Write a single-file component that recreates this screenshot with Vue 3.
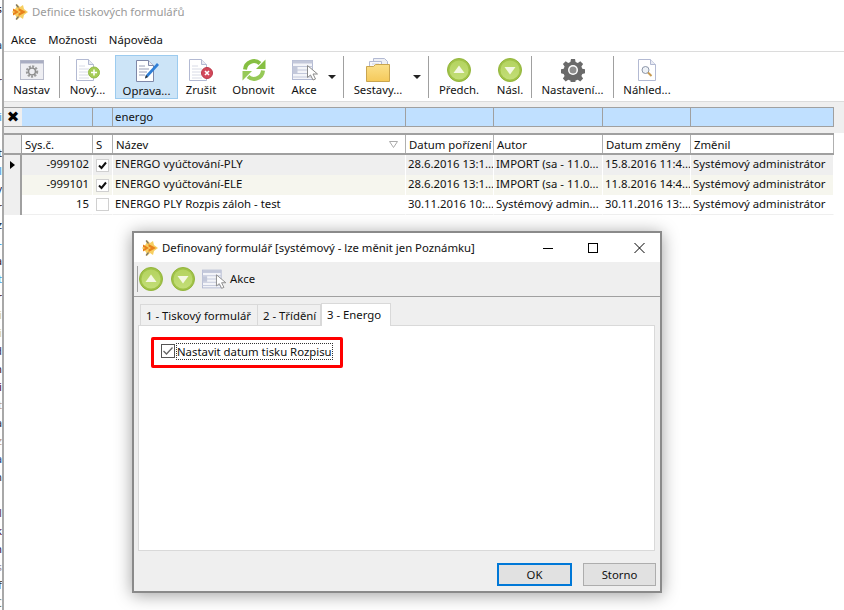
<script setup>
const behind = [
  ['s', '#301010'], ['', ''], ['a', '#204060'], ['', ''], ['r', '#502020'], ['', ''], ['i', '#40a0e0'], ['', ''],
  ['t', '#202020'], ['l', '#40a0e0'], ['y', '#203050'], ['r', '#503020'], ['z', '#203040'], ['-', '#40a0e0'],
  ['a', '#402020'], ['t', '#40a0e0'], ['r', '#502020'], ['i', '#d8d0a0'], ['i', '#d8d0a0'], ['d', '#404060'],
  ['n', '#402020'], ['i', '#501030'], ['t', '#c0a080'], ['a', '#303040'], ['z', '#c0a080'], ['a', '#204080'],
  ['n', '#303030'], ['', ''], ['l', '#604060'], ['k', '#501030'], ['n', '#302050'], ['s', '#a09090'],
  ['f', '#403020'], ['C', '#808060'], ['(', '#808080']
]

const tools = [
  { icon: 'i-window', label: 'Nastav', width: 55 },
  { sep: true },
  { icon: 'i-new', label: 'Nový...', width: 55 },
  { icon: 'i-edit', label: 'Oprava...', width: 63, active: true },
  { icon: 'i-del', label: 'Zrušit', width: 46 },
  { icon: 'i-refresh', label: 'Obnovit', width: 59 },
  { icon: 'i-list', label: 'Akce', width: 60, menu: 18 },
  { sep: true },
  { icon: 'i-folder', label: 'Sestavy...', width: 84, menu: 16 },
  { sep: true },
  { icon: 'i-up', label: 'Předch.', width: 60 },
  { icon: 'i-down', label: 'Násl.', width: 42 },
  { sep: true },
  { icon: 'i-gear', label: 'Nastavení...', width: 81 },
  { sep: true },
  { icon: 'i-preview', label: 'Náhled...', width: 66 }
]

const filterCells = ['', '', 'energo', '', '', '', '']
const headers = [
  { t: 'Sys.č.' }, { t: 'S' }, { t: 'Název', sort: true }, { t: 'Datum pořízení' },
  { t: 'Autor' }, { t: 'Datum změny' }, { t: 'Změnil' }
]
const rows = [
  { id: '-999102', on: true, name: 'ENERGO vyúčtování-PLY', a: '28.6.2016 13:1...', b: 'IMPORT (sa - 11.0...', c: '15.8.2016 11:4...', d: 'Systémový administrátor', cls: 'r1', cur: true },
  { id: '-999101', on: true, name: 'ENERGO vyúčtování-ELE', a: '28.6.2016 13:1...', b: 'IMPORT (sa - 11.0...', c: '11.8.2016 14:4...', d: 'Systémový administrátor', cls: 'r2' },
  { id: '15', on: false, name: 'ENERGO PLY Rozpis záloh - test', a: '30.11.2016 10:...', b: 'Systémový admin...', c: '30.11.2016 13:...', d: 'Systémový administrátor', cls: 'r3' }
]
</script>

<template>
  <div class="desk">
    <svg class="defs" width="0" height="0" aria-hidden="true">
      <defs>
        <linearGradient id="fold" x1="0" y1="0" x2="0" y2="1">
          <stop offset="0" stop-color="#fbe08a" />
          <stop offset="1" stop-color="#f5c95a" />
        </linearGradient>
        <linearGradient id="ball" x1="0" y1="0" x2="0" y2="1">
          <stop offset="0" stop-color="#b4d35f" />
          <stop offset="1" stop-color="#c3de78" />
        </linearGradient>
        <symbol id="i-logo" viewBox="0 0 16 16">
          <path d="M5 0l3 3 3-2 1 4 4 3-4 3-1 4-3-2-3 3-1-4-4-4 4-4z" fill="#f7cf62" />
          <path d="M1 4.500L7 8l-6 3.500V9L3.500 8 1 7zM6.500 4L14 8l-7.500 4V9.500L9 8 6.500 6.500z" fill="#e8811c" />
          <path d="M4 .5l2.500 3M4 15.500l2.500-3" stroke="#7a7468" stroke-width="1.200" />
        </symbol>
        <symbol id="i-window" viewBox="0 0 24 24">
          <rect x=".5" y="2.500" width="23" height="19" fill="#eeeef2" stroke="#b9bccb" />
          <rect x=".5" y="2.500" width="23" height="3" fill="#a9adc2" />
          <circle cx="12" cy="13.500" r="5" fill="none" stroke="#9a9a9a" stroke-width="2.400" stroke-dasharray="2 1.300" />
          <circle cx="12" cy="13.500" r="3.400" fill="none" stroke="#8c8c8c" stroke-width="1.400" />
        </symbol>
        <symbol id="i-page" viewBox="0 0 24 24">
          <path d="M.5 1.500h12l5 5v16H.5z" fill="#fff" stroke="#b3bad3" />
          <path d="M12.500 1.500v5h5" fill="#e9ebf3" stroke="#b3bad3" />
          <path d="M3 8h6M3 11h10M3 14h9M3 17h10M3 20h10" stroke="#d8dbe6" />
        </symbol>
        <symbol id="i-new" viewBox="0 0 24 24">
          <use href="#i-page" width="24" height="24" />
          <circle cx="18" cy="14.500" r="5.500" fill="#a5cc57" stroke="#94bb48" />
          <path d="M18 11.500v6M15 14.500h6" stroke="#fff" stroke-width="1.500" />
        </symbol>
        <symbol id="i-edit" viewBox="0 0 24 24">
          <path d="M1.500 2.500h12l5 5v16h-17z" fill="#fff" stroke="#7f88a8" />
          <path d="M13.500 2.500v5h5" fill="#e9ebf3" stroke="#7f88a8" />
          <path d="M4 8h6M4 11h10M4 14h8M4 17h6" stroke="#9aa0b8" />
          <path d="M22 5l2 2-11 12-3 1.500 1-3.500z" fill="#2f7fd6" />
          <path d="M10 20.500l1-3.500 2 2z" fill="#333" />
        </symbol>
        <symbol id="i-del" viewBox="0 0 24 24">
          <use href="#i-page" width="24" height="24" />
          <circle cx="18" cy="15" r="5.500" fill="#d3485a" stroke="#bb3a4c" />
          <path d="M16 13l4 4M20 13l-4 4" stroke="#fff" stroke-width="1.600" />
        </symbol>
        <symbol id="i-refresh" viewBox="0 0 24 24">
          <path d="M3 11.500A9 9 0 0 1 18 5.500" fill="none" stroke="#86bf42" stroke-width="4" />
          <path d="M23.500 1.500v9.500h-9.500z" fill="#86bf42" />
          <g transform="rotate(180 12 12)">
            <path d="M3 11.500A9 9 0 0 1 18 5.500" fill="none" stroke="#96c957" stroke-width="4" />
            <path d="M23.500 1.500v9.500h-9.500z" fill="#96c957" />
          </g>
        </symbol>
        <symbol id="i-list" viewBox="0 0 30 24">
          <rect x=".5" y="2.500" width="20" height="19" fill="#f4f5f9" stroke="#b3bad3" />
          <rect x=".5" y="2.500" width="20" height="3" fill="#c3c8da" />
          <path d="M.5 8.500h20M.5 12h20M.5 15.500h20M.5 19h20" stroke="#c3c8da" />
          <path d="M.5 9h5v6h-5z" fill="#c3c8da" />
          <path d="M15.500 7.500v12l3-2.500 2.500 5 2.500-1-2.500-5h4.500z" fill="#fff" stroke="#8a8a8a" />
        </symbol>
        <symbol id="i-folder" viewBox="0 0 24 24">
          <path d="M7.500.5h11l3 3v10h-14z" fill="#eef0f5" stroke="#b3bad3" />
          <path d="M3.500 3.500h12v10h-12z" fill="#f6f7fa" stroke="#b3bad3" />
          <path d="M6 6h7M6 8.500h7" stroke="#cfd3e0" />
          <path d="M.5 8.500h7l2-2h14v17H.5z" fill="url(#fold)" stroke="#c9a550" />
        </symbol>
        <symbol id="i-up" viewBox="0 0 24 24">
          <circle cx="12" cy="12" r="11.500" fill="#a1c348" stroke="#93b53c" />
          <circle cx="12" cy="12" r="9.500" fill="url(#ball)" />
          <path d="M12 7.500l5.500 7.500h-11z" fill="#f4f8e4" />
        </symbol>
        <symbol id="i-down" viewBox="0 0 24 24">
          <circle cx="12" cy="12" r="11.500" fill="#a1c348" stroke="#93b53c" />
          <circle cx="12" cy="12" r="9.500" fill="url(#ball)" />
          <path d="M12 16.500l5.500-7.500h-11z" fill="#f4f8e4" />
        </symbol>
        <symbol id="i-gear" viewBox="0 0 24 24">
          <path d="M10 1h4l.6 3 2.200.9 2.500-1.700 2.800 2.800-1.700 2.500.9 2.200 3 .6v4l-3 .6-.9 2.200 1.700 2.500-2.800 2.800-2.500-1.700-2.200.9-.6 3h-4l-.6-3-2.200-.9-2.500 1.700-2.800-2.800 1.700-2.500-.9-2.200-3-.6v-4l3-.6.9-2.200-1.700-2.500 2.800-2.800 2.500 1.700 2.200-.9z" fill="#6a6a6a" />
          <circle cx="12" cy="12" r="5" fill="#fff" />
          <circle cx="12" cy="12" r="3.500" fill="#8e8e8e" />
        </symbol>
        <symbol id="i-preview" viewBox="0 0 24 24">
          <path d="M3.500 1.500h12l5 5v16h-17z" fill="#fff" stroke="#b3bad3" />
          <path d="M15.500 1.500v5h5" fill="#e9ebf3" stroke="#b3bad3" />
          <circle cx="10.500" cy="12" r="3.500" fill="#eef2f7" stroke="#8c96a8" />
          <path d="M13 14.500l3.500 3.500" stroke="#c89a50" stroke-width="2" />
        </symbol>
      </defs>
    </svg>

    <div class="behind">
      <div v-for="(b, i) in behind" :key="i" class="behind-line" :style="{ color: b[1] }"><span>{{ b[0] }}</span></div>
    </div>

    <div class="win">
      <div class="title">
        <svg class="logo"><use href="#i-logo" /></svg>
        <span>Definice tiskových formulářů</span>
      </div>
      <div class="menu">
        <span>Akce</span><span>Možnosti</span><span>Nápověda</span>
      </div>
      <div class="toolbar">
        <template v-for="(t, i) in tools" :key="i">
          <div v-if="t.sep" class="sep"></div>
          <div v-else class="tool" :class="{ active: t.active }" :style="{ width: t.width + 'px', paddingRight: (t.menu || 0) + 'px' }">
            <svg class="ticon" :class="{ wide: t.icon === 'i-list' }"><use :href="'#' + t.icon" /></svg>
            <span class="tlabel">{{ t.label }}</span>
            <i v-if="t.menu" class="caret"></i>
          </div>
        </template>
      </div>

      <div class="band">
        <div class="filter">
          <div class="clear">✖</div>
          <div v-for="(c, i) in filterCells" :key="i" class="fcell">{{ c }}</div>
        </div>
      </div>
      <div class="thead">
        <div class="hind"></div>
        <div v-for="h in headers" :key="h.t" class="hcell">
          <span>{{ h.t }}</span>
          <svg v-if="h.sort" class="sort" width="9" height="7" viewBox="0 0 9 7"><path d="M.5.500h8L4.500 6.500z" fill="#fff" stroke="#aaa" /></svg>
        </div>
      </div>

      <div v-for="r in rows" :key="r.id" class="row" :class="r.cls">
        <div class="ind"><i v-if="r.cur" class="cursor"></i></div>
        <div class="cell num">{{ r.id }}</div>
        <div class="cell chk"><span class="box"><svg v-if="r.on" width="11" height="11" viewBox="0 0 11 11"><path d="M2 5.500l2.500 2.500L9 2.500" fill="none" stroke="#111" stroke-width="2" /></svg></span></div>
        <div class="cell">{{ r.name }}</div>
        <div class="cell">{{ r.a }}</div>
        <div class="cell">{{ r.b }}</div>
        <div class="cell">{{ r.c }}</div>
        <div class="cell">{{ r.d }}</div>
      </div>
    </div>

    <div class="dlg">
      <div class="dtitle">
        <svg class="logo"><use href="#i-logo" /></svg>
        <span class="dname">Definovaný formulář [systémový - lze měnit jen Poznámku]</span>
        <div class="controls">
          <svg width="45" height="12" viewBox="0 0 45 12"><path d="M0 6.500h10" stroke="#000" /></svg>
          <svg width="46" height="12" viewBox="0 0 46 12"><rect x=".5" y="1.500" width="9" height="9" fill="none" stroke="#000" /></svg>
          <svg width="12" height="12" viewBox="0 0 12 12"><path d="M.5 1l10 10M10.500 1l-10 10" stroke="#000" /></svg>
        </div>
      </div>
      <div class="dtools">
        <div class="dsep"></div>
        <svg class="dicon"><use href="#i-up" /></svg>
        <svg class="dicon"><use href="#i-down" /></svg>
        <svg class="dicon wide"><use href="#i-list" /></svg>
        <span>Akce</span>
      </div>
      <div class="dbody">
        <div class="tabs">
          <div class="tab t1">1 - Tiskový formulář</div>
          <div class="tab t2">2 - Třídění</div>
          <div class="tab t3 on">3 - Energo</div>
        </div>
        <div class="panel">
          <div class="mark">
            <span class="cb"><svg width="12" height="12" viewBox="0 0 12 12"><path d="M1.500 6l3 3 6-6.500" fill="none" stroke="#666" stroke-width="1.300" /></svg></span>
            <span class="cbl">Nastavit datum tisku Rozpisu</span>
          </div>
        </div>
        <div class="foot">
          <button class="btn ok">OK</button>
          <button class="btn">Storno</button>
        </div>
      </div>
    </div>
  </div>
</template>

<style>
html, body { margin: 0; overflow: hidden; background: #fff; }
</style>

<style scoped>
.desk {
  position: relative;
  display: flex;
  width: 844px;
  height: 610px;
  overflow: hidden;
  background: #fff;
  color: #111;
  font: 11.35px/16px "Noto Sans", sans-serif;
}
.defs { position: absolute; }
.behind { width: 2px; flex: none; overflow: hidden; padding-top: 1px; }
.behind-line { height: 18px; width: 2px; display: flex; justify-content: flex-end; overflow: hidden; }
.behind-line span { flex: none; }

.win { flex: 1; border-left: 2px solid #a8a8a8; min-width: 0; }
.title { height: 23px; padding-bottom: 2px; display: flex; align-items: center; padding-left: 8px; color: #9a9a9a; }
.logo { width: 16px; height: 16px; margin-right: 4px; flex: none; }
.menu { height: 26px; padding-top: 3px; display: flex; align-items: center; gap: 12px; padding-left: 7px; box-sizing: border-box; }
.toolbar { height: 50px; border-top: 1px solid #dcdcdc; box-sizing: border-box; display: flex; align-items: center; padding-top: 1px; }
.sep { width: 1px; height: 42px; background: #a0a0a0; flex: none; }
.tool {
  position: relative;
  height: 44px;
  box-sizing: border-box;
  flex: none;
  display: flex;
  flex-direction: column;
  align-items: center;
  padding-top: 3px;
}
.tool.active { background: #cce4f7; outline: 1px solid #9ccbef; outline-offset: -1px; }
.tool.active .tlabel { position: relative; top: 1px; }
.ticon { width: 24px; height: 24px; flex: none; }
.ticon.wide { width: 30px; margin-left: 6px; }
.tlabel { white-space: nowrap; }
.caret {
  position: absolute;
  right: 7px;
  top: 20px;
  border: 4px solid transparent;
  border-top: 4px solid #222;
}

.band { background: #efefef; border-top: 1px solid #dcdcdc; padding: 5px 0 6px; }
.filter, .thead, .row {
  display: grid;
  grid-template-columns: 18px 71px 20px 293px 88px 109px 88px 143px;
  width: 830px;
}
.filter { height: 20px; box-sizing: border-box; border-top: 1px solid #a0a0a0; border-bottom: 1px solid #a0a0a0; background: #c0e0ff; }
.clear { background: #efefef; font: 700 15px/18px "DejaVu Sans", sans-serif; text-align: center; color: #000; }
.fcell { border-right: 1px solid #a0a0a0; padding-left: 2px; line-height: 17px; overflow: hidden; }
.fcell:first-of-type { border-left: 1px solid #a0a0a0; }

.thead { height: 22px; box-sizing: border-box; background: #fff; border-top: 2px solid #a0a0a0; border-bottom: 2px solid #a0a0a0; }
.hind { background: #efefef; border-right: 1px solid #a0a0a0; }
.hcell { position: relative; padding-left: 3px; line-height: 19px; white-space: nowrap; overflow: hidden; border-right: 1px solid #b0b0b0; }
.sort { position: absolute; right: 7px; top: 6px; }

.row { height: 20px; line-height: 18px; }
.ind { background: #efefef; border-right: 2px solid #a0a0a0; display: flex; align-items: center; justify-content: center; }
.cursor { border: 4px solid transparent; border-left: 5px solid #000; border-right: 0; }
.cell { padding-left: 2px; white-space: nowrap; overflow: hidden; border-right: 1px solid #fff; }
.num { text-align: right; padding-right: 3px; }
.chk { display: flex; justify-content: center; align-items: center; padding: 0; }
.box { width: 11px; height: 11px; border: 1px solid #d0d0d0; background: #fff; display: block; }
.box svg { display: block; }
.r1 .cell { background: #efefef; }
.r2 .cell { background: #f6f6ee; }
.r3 .cell { background: #fff; border-bottom: 1px solid #efefef; }

.dlg {
  position: absolute;
  left: 132px;
  top: 231px;
  width: 530px;
  height: 362px;
  box-sizing: border-box;
  border: 2px solid #8a8a8a;
  box-shadow: 0 2px 16px rgba(0, 0, 0, .38);
  background: #efefef;
  display: flex;
  flex-direction: column;
}
.dtitle { height: 29px; flex: none; background: #fff; display: flex; align-items: center; padding-left: 8px; }
.dtitle .logo { margin-right: 4px; }
.dname { flex: 1; white-space: nowrap; }
.controls { display: flex; align-items: center; width: 103px; flex: none; margin-right: 14px; }
.controls svg { flex: none; }
.dtools { height: 34px; flex: none; box-sizing: border-box; display: flex; align-items: center; padding-left: 3px; }
.dsep { width: 1px; height: 26px; background: #a0a0a0; margin-right: 1px; }
.dicon { width: 24px; height: 24px; margin-right: 8px; flex: none; }
.dicon.wide { width: 28px; margin: 0 0 0 -1px; }
.dbody { flex: 1; border-top: 1px solid #a0a0a0; padding: 6px 5px 0 4px; display: flex; flex-direction: column; min-height: 0; }
.tabs { display: flex; height: 23px; padding-left: 2px; flex: none; }
.tab { box-sizing: border-box; height: 22px; margin-top: 1px; border: 1px solid #d9d9d9; border-bottom: 0; padding-left: 5px; line-height: 21px; white-space: nowrap; background: #f0f0f0; }
.tab.t1 { width: 118px; }
.tab.t2 { width: 63px; border-left: 0; }
.tab.t3 { width: 70px; }
.tab.on { background: #fff; height: 23px; margin-top: 0; position: relative; z-index: 1; }
.panel { height: 226px; flex: none; box-sizing: border-box; border: 1px solid #d9d9d9; background: #fff; margin-top: -1px; padding: 11px 0 0 12px; }
.mark {
  box-sizing: border-box;
  width: 192px;
  height: 31px;
  border: 3px solid #f00;
  border-radius: 2px;
  display: flex;
  align-items: center;
  padding: 0 0 3px 7px;
}
.cb { border: 1px solid #555; flex: none; display: block; width: 12px; height: 12px; margin-right: 2px; }
.cb svg { display: block; }
.cbl { outline: 1px dotted #333; white-space: nowrap; line-height: 15px; }
.foot { display: flex; justify-content: flex-end; gap: 11px; padding-top: 12px; margin-right: -1px; }
.btn {
  width: 73px;
  height: 23px;
  box-sizing: border-box;
  border: 1px solid #adadad;
  background: #e1e1e1;
  font: inherit;
  color: #111;
  padding: 0;
}
.btn.ok { width: 75px; border: 2px solid #0078d7; }
</style>
